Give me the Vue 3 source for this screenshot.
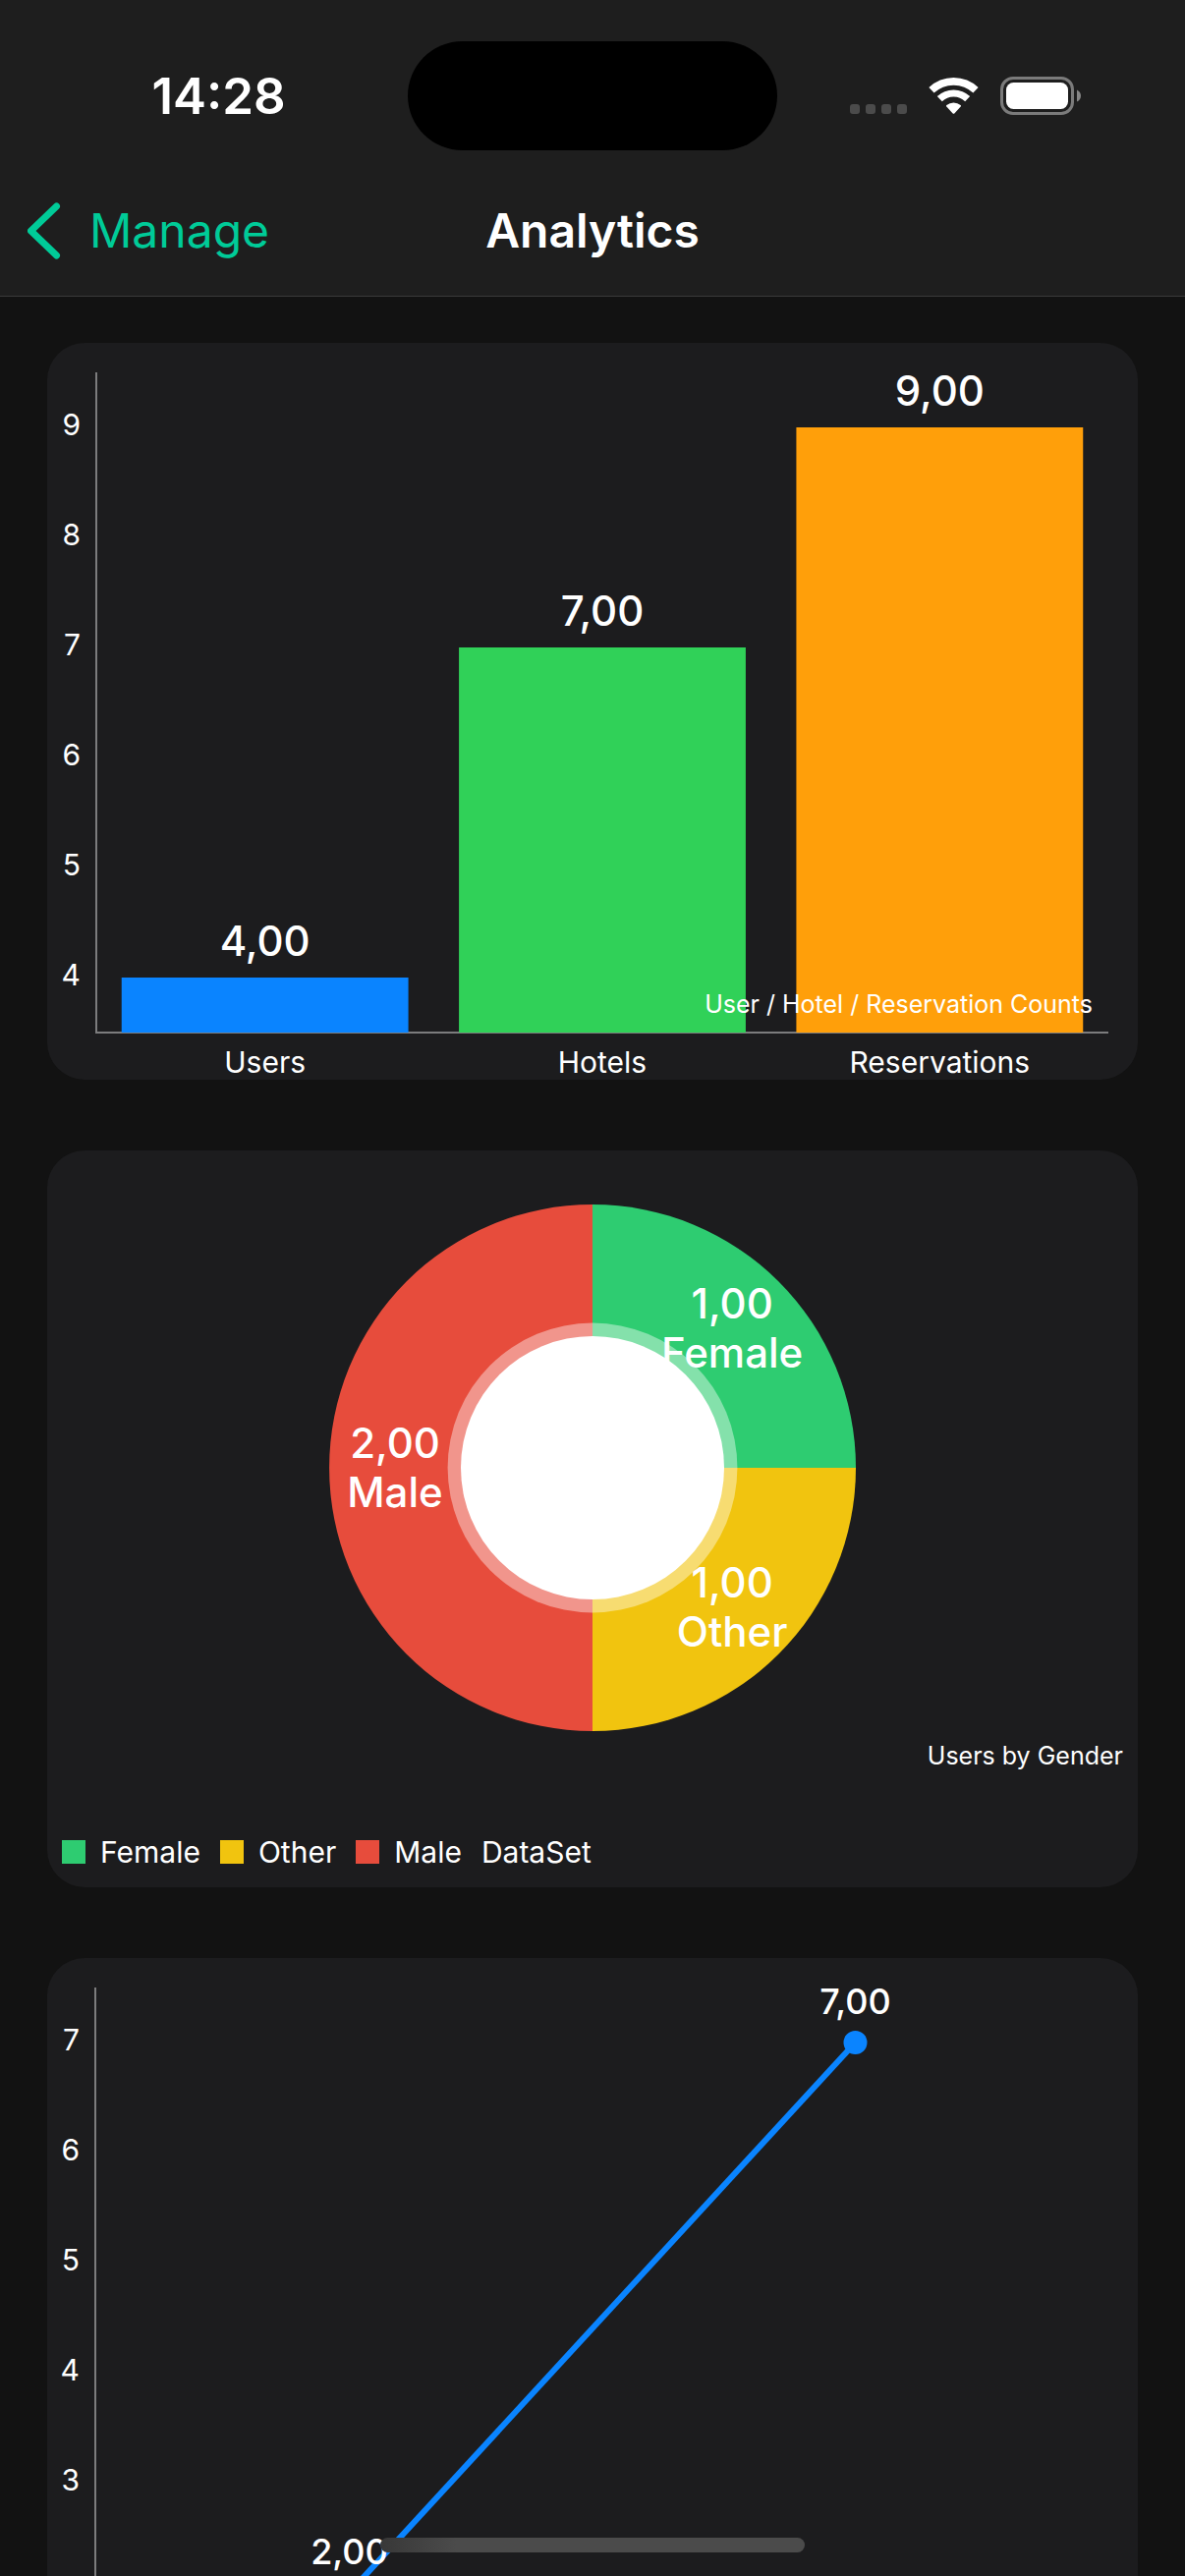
<script setup>
const formatValue = (value) => value.toFixed(2).replace('.', ',')

/* Shared drawing area of the two axis charts */
const plot = { left: 50, top: 30, width: 1030, height: 672 }
const plotBottom = plot.top + plot.height
const plotRight = plot.left + plot.width

const scaleY = (value, max) => plot.top + (max - value) * 112

/* Counts */
const counts = [
  { label: 'Users', value: 4, color: '#0a84ff' },
  { label: 'Hotels', value: 7, color: '#30d158' },
  { label: 'Reservations', value: 9, color: '#ff9f0a' },
]
const slot = plot.width / counts.length
const bars = counts.map((item, i) => {
  const y = scaleY(item.value, 9.5)
  return {
    ...item,
    x: plot.left + slot * (i + 0.075),
    center: plot.left + slot * (i + 0.5),
    y,
    width: slot * 0.85,
    height: plotBottom - y,
  }
})
const countTicks = [9, 8, 7, 6, 5, 4]

/* Genders */
const pie = { cx: 555, cy: 323, r: 268 }
const genders = [
  { label: 'Female', value: 1, color: '#2ecc71' },
  { label: 'Other', value: 1, color: '#f1c40f' },
  { label: 'Male', value: 2, color: '#e74c3c' },
]
const total = genders.reduce((sum, g) => sum + g.value, 0)
const pointAt = (turn, radius) => {
  const angle = turn * 2 * Math.PI - Math.PI / 2
  return { x: pie.cx + radius * Math.cos(angle), y: pie.cy + radius * Math.sin(angle) }
}
let turned = 0
const slices = genders.map((g) => {
  const from = pointAt(turned, pie.r)
  const middle = pointAt(turned + g.value / total / 2, pie.r * 0.75)
  turned += g.value / total
  const to = pointAt(turned, pie.r)
  return {
    ...g,
    middle,
    path: `M${pie.cx} ${pie.cy}L${from.x} ${from.y}A${pie.r} ${pie.r} 0 0 1 ${to.x} ${to.y}Z`,
  }
})

/* Trend */
const trend = [2, 7].map((value, i) => ({
  value,
  x: plot.left + plot.width * (0.25 + i * 0.5),
  y: scaleY(value, 7.5),
}))
const trendLine = trend.map((p) => `${p.x},${p.y}`).join(' ')
const trendTicks = [7, 6, 5, 4, 3]
</script>

<template>
  <div class="screen">
    <header class="header">
      <div class="status">
        <span class="time">14:28</span>
        <span class="island"></span>
        <div class="indicators">
          <span class="signal"><i></i><i></i><i></i><i></i></span>
          <svg width="51" height="37" viewBox="0 0 51 37" aria-hidden="true">
            <g fill="none" stroke="#fff">
              <path d="M3 12.8A32.7 32.7 0 0 1 48 12.8" stroke-width="7.6" />
              <path d="M11.3 21.7A20.5 20.5 0 0 1 39.7 21.7" stroke-width="7.2" />
            </g>
            <path
              d="M18.3 29.6Q17.6 28.8 18.4 28.1A11 11 0 0 1 32.6 28.1Q33.4 28.8 32.7 29.6L26.3 36.4Q25.5 37.2 24.7 36.4Z"
              fill="#fff"
            />
          </svg>
          <svg width="82" height="39" viewBox="0 0 82 39" aria-hidden="true">
            <rect x="1.5" y="1.5" width="72" height="36" rx="11.5" fill="none" stroke="#7b7b7b" stroke-width="3" />
            <rect x="6" y="6" width="63" height="27" rx="7.5" fill="#fff" />
            <path d="M78 13.5Q82 15.5 82 19.5T78 25.5Z" fill="#868686" />
          </svg>
        </div>
      </div>
      <nav class="nav">
        <a class="back" href="#">
          <svg width="34" height="58" viewBox="0 0 34 58" aria-hidden="true">
            <path d="M29.5 4L3.5 29L29.5 54" fill="none" stroke="currentColor" stroke-width="7" stroke-linecap="round" stroke-linejoin="round" />
          </svg>
          <span>Manage</span>
        </a>
        <h1 class="title">Analytics</h1>
      </nav>
    </header>

    <main class="content">
      <section class="card">
        <svg class="chart" viewBox="0 0 1110 750" role="img" aria-label="User / Hotel / Reservation Counts">
          <path class="axis" :d="`M${plot.left} ${plot.top}V${plotBottom}H${plotRight}`" />
          <text v-for="t in countTicks" :key="t" class="tick end" x="34" :y="scaleY(t, 9.5) + 8">{{ t }}</text>
          <g v-for="bar in bars" :key="bar.label">
            <rect :x="bar.x" :y="bar.y" :width="bar.width" :height="bar.height" :fill="bar.color" />
            <text class="value middle" :x="bar.center" :y="bar.y - 22">{{ formatValue(bar.value) }}</text>
            <text class="tick middle" :x="bar.center" :y="plotBottom + 41">{{ bar.label }}</text>
          </g>
          <text class="note end" :x="plotRight - 16" :y="plotBottom - 20">User / Hotel / Reservation Counts</text>
        </svg>
      </section>

      <section class="card">
        <svg class="chart" viewBox="0 0 1110 696" role="img" aria-label="Users by Gender">
          <path v-for="s in slices" :key="s.label" :d="s.path" :fill="s.color" />
          <circle :cx="pie.cx" :cy="pie.cy" :r="pie.r * 0.55" fill="#fff" fill-opacity="0.41" />
          <circle :cx="pie.cx" :cy="pie.cy" :r="pie.r * 0.5" fill="#fff" />
          <g v-for="s in slices" :key="s.label">
            <text class="value middle" :x="s.middle.x" :y="s.middle.y - 10">{{ formatValue(s.value) }}</text>
            <text class="value middle" :x="s.middle.x" :y="s.middle.y + 40">{{ s.label }}</text>
          </g>
          <text class="note end" x="1095" y="625">Users by Gender</text>
        </svg>
        <ul class="legend">
          <li v-for="g in genders" :key="g.label">
            <span class="swatch" :style="{ background: g.color }"></span>{{ g.label }}
          </li>
          <li>DataSet</li>
        </ul>
      </section>

      <section class="card">
        <svg class="chart" viewBox="0 0 1110 750" role="img" aria-label="Trend">
          <path class="axis" :d="`M${plot.left - 1} ${plot.top}V${plotBottom}H${plotRight}`" />
          <text v-for="t in trendTicks" :key="t" class="tick end" x="33" :y="scaleY(t, 7.5) + 8">{{ t }}</text>
          <polyline :points="trendLine" fill="none" stroke="#0a84ff" stroke-width="6" />
          <g v-for="p in trend" :key="p.value">
            <circle :cx="p.x" :cy="p.y" r="12" fill="#0a84ff" />
            <text class="point middle" :x="p.x" :y="p.y - 29">{{ formatValue(p.value) }}</text>
          </g>
        </svg>
      </section>
    </main>
    <div class="home"></div>
  </div>
</template>

<style>
body {
  background: #121212;
}
</style>

<style scoped>
.screen {
  position: relative;
  display: flex;
  flex-direction: column;
  height: 100vh;
  overflow: hidden;
  background: #121212;
  color: #fff;
  font-family: Inter, "Liberation Sans", sans-serif;
}
.header {
  flex: none;
  background: #1e1e1e;
  border-bottom: 1px solid #3a3a3a;
}
.status {
  display: grid;
  grid-template-columns: 1fr 376px 1fr;
  align-items: center;
  padding-top: 42px;
}
.time {
  padding-left: 30px;
  text-align: center;
  font-size: 51px;
  font-weight: 600;
}
.island {
  height: 111px;
  border-radius: 56px;
  background: #000;
}
.indicators {
  display: flex;
  align-items: center;
  gap: 22px;
  padding-left: 74px;
}
.signal {
  display: flex;
  align-items: flex-end;
  gap: 6px;
  height: 37px;
}
.signal i {
  width: 10px;
  height: 10px;
  border-radius: 3px;
  background: #4b4b4b;
}
.nav {
  display: grid;
  grid-template-columns: 1fr auto 1fr;
  align-items: center;
  height: 132px;
  padding: 16px 28px 0;
  font-size: 48px;
  line-height: 60px;
}
.back {
  display: flex;
  align-items: center;
  gap: 29px;
  color: #00cb98;
  text-decoration: none;
}
.title {
  margin: 0;
  font-size: 48px;
  font-weight: 600;
}
.content {
  flex: 1;
  min-height: 0;
  display: flex;
  flex-direction: column;
  gap: 72px;
  padding: 47px 48px;
  overflow: auto;
  scrollbar-width: none;
}
.card {
  flex: none;
  border-radius: 38px;
  background: #1c1c1e;
  overflow: hidden;
}
.chart {
  display: block;
  width: 100%;
  height: auto;
  fill: #fff;
}
.axis {
  fill: none;
  stroke: #7c7c7d;
  stroke-width: 2;
}
.tick {
  font-size: 30px;
}
.value {
  font-size: 42px;
  font-weight: 500;
}
.point {
  font-size: 36px;
  font-weight: 500;
}
.note {
  font-size: 25px;
}
.middle {
  text-anchor: middle;
}
.end {
  text-anchor: end;
}
.legend {
  display: flex;
  gap: 20px;
  margin: 0;
  padding: 0 15px 18px;
  list-style: none;
  font-size: 30px;
  line-height: 36px;
}
.legend li {
  display: flex;
  align-items: center;
  gap: 15px;
}
.swatch {
  width: 24px;
  height: 24px;
}
.home {
  position: absolute;
  bottom: 24px;
  left: 50%;
  width: 432px;
  height: 15px;
  border-radius: 8px;
  background: linear-gradient(90deg, #383838, #4b4b4b 18%);
  transform: translateX(-50%);
}
</style>
